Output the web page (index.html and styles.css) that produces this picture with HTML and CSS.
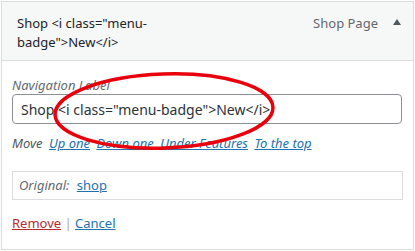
FILE: index.html
```html
<!DOCTYPE html>
<html lang="en">
<head>
    <meta charset="UTF-8">
    <title>Menu Item</title>
    <link rel="stylesheet" href="styles.css">
</head>
<body>
<div class="menu-item">
    <div class="item-bar">
        <span class="item-title">Shop &lt;i class="menu-badge"&gt;New&lt;/i&gt;</span>
        <span class="item-controls">
            <span class="item-type">Shop Page</span>
            <span class="item-toggle"></span>
        </span>
    </div>
    <div class="item-settings">
        <label class="field-label" for="navLabel">Navigation Label</label>
        <input type="text" id="navLabel" class="label-input" value='Shop <i class="menu-badge">New</i>'>

        <div class="field-move">
            <span class="move-label">Move</span>
            <a href="#">Up one</a>
            <a href="#">Down one</a>
            <a href="#">Under Features</a>
            <a href="#">To the top</a>
        </div>

        <div class="original">
            <span class="original-label">Original:</span>
            <a href="#">shop</a>
        </div>

        <div class="actions">
            <a href="#" class="remove">Remove</a> <span class="sep">|</span> <a href="#">Cancel</a>
        </div>
    </div>

    <svg class="circle" width="240" height="84" viewBox="0 0 240 84">
        <ellipse cx="120" cy="40" rx="109" ry="37" fill="none" stroke="#e8000b" stroke-width="3.5" transform="rotate(-2 120 40)"/>
    </svg>
</div>
</body>
</html>
```

FILE: styles.css
```css
body {
    margin: 0;
    padding: 1px;
    font-family: "Noto Sans", "Open Sans", sans-serif;
    font-size: 13px;
    color: #1d2327;
    background: #fff;
}
.menu-item {
    position: relative;
    border: 1px solid #dcdcde;
    box-sizing: border-box;
    width: 413px;
    height: 249px;
}
.item-bar {
    display: flex;
    justify-content: space-between;
    align-items: flex-start;
    box-sizing: border-box;
    background: #f6f7f7;
    border-bottom: 1px solid #dcdcde;
    height: 59px;
    padding: 12px 10px 0 15px;
}
.item-title {
    width: 160px;
    font-size: 13px;
    line-height: 19px;
}
.item-controls {
    display: flex;
    align-items: center;
    gap: 15px;
    color: #646970;
    line-height: 19px;
}
.item-toggle {
    width: 0;
    height: 0;
    border-left: 4.5px solid transparent;
    border-right: 4.5px solid transparent;
    border-bottom: 6px solid #50575e;
    margin-top: -3px;
    margin-right: 2px;
}
.item-settings {
    padding: 16px 10px 10px;
}
.field-label {
    display: block;
    font-style: italic;
    color: #646970;
    line-height: 16px;
    margin-bottom: 1px;
}
.label-input {
    display: block;
    width: 390px;
    height: 30px;
    box-sizing: border-box;
    border: 1px solid #8c8f94;
    border-radius: 4px;
    padding: 0 8px;
    font-family: inherit;
    font-size: 14px;
    color: #2c3338;
}
.field-move {
    margin-top: 10px;
    line-height: 18px;
}
.move-label {
    font-style: italic;
    color: #50575e;
}
a {
    color: #2271b1;
}
.field-move a {
    font-style: italic;
    margin-left: 3px;
}
.original {
    margin-top: 19px;
    width: 391px;
    box-sizing: border-box;
    border: 1px solid #dcdcde;
    padding: 5px 6px;
    line-height: 17px;
}
.original-label {
    font-style: italic;
    color: #646970;
    margin-right: 4px;
}
.actions {
    margin-top: 14px;
    line-height: 18px;
}
.actions .remove {
    color: #b32d2e;
}
.sep {
    color: #a7aaad;
}
.circle {
    position: absolute;
    left: 42px;
    top: 69px;
}
```
